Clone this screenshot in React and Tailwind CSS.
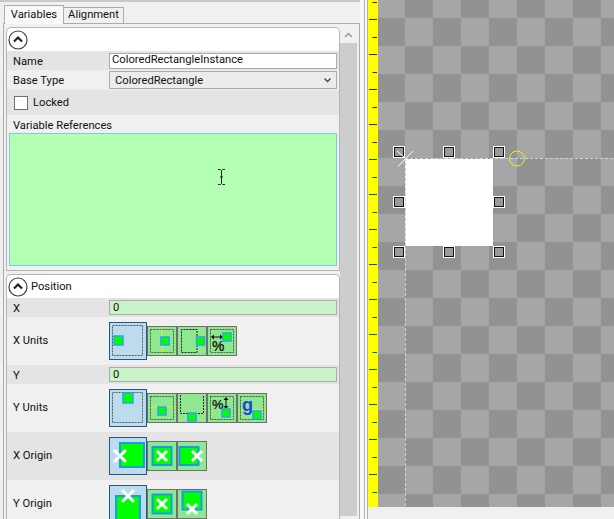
const rulerY = Array.from({ length: 15 }, (_, i) => i)

// small green square with the blue edge used on every unit button
const Sq = ({ x, y, s = 8, w = 1.5 }) => (
  <rect x={x} y={y} width={s} height={s} fill="#00ff00" stroke="#2aa5e8" strokeWidth={w} />
)

const Dots = ({ x = 3.5, y = 3.5, s = 23 }) => (
  <rect x={x} y={y} width={s} height={s} fill="none" stroke="#3a3a3a" strokeWidth="1" strokeDasharray="2 1" strokeOpacity="0.8" />
)

const Cross = ({ x, y, r = 5, w = 3 }) => (
  <path d={`M${x - r} ${y - r}L${x + r} ${y + r}M${x + r} ${y - r}L${x - r} ${y + r}`} stroke="#fff" strokeWidth={w} />
)

const ArrowH = ({ x1, x2, y }) => (
  <g fill="#111">
    <line x1={x1} x2={x2} y1={y} y2={y} stroke="#111" />
    <path d={`M${x1 - 1} ${y}l3 -2.5v5z`} />
    <path d={`M${x2 + 1} ${y}l-3 -2.5v5z`} />
  </g>
)

const ArrowV = ({ y1, y2, x }) => (
  <g fill="#111">
    <line x1={x} x2={x} y1={y1} y2={y2} stroke="#111" />
    <path d={`M${x} ${y1 - 1}l-2.5 3h5z`} />
    <path d={`M${x} ${y2 + 1}l-2.5 -3h5z`} />
  </g>
)

const IconBtn = ({ children }) => (
  <div className="h-[30px] w-[30px] shrink-0 border border-[#6f6f6f] bg-[#8fe88f]">
    <svg width="28" height="28" viewBox="1 1 28 28" className="block">{children}</svg>
  </div>
)

const IconSel = ({ children }) => (
  <div className="h-[38px] w-[38px] shrink-0 border border-[#1f5a85] bg-[#bcdcee]">
    <svg width="36" height="36" viewBox="1 1 36 36" overflow="hidden" className="block">{children}</svg>
  </div>
)

const Row = ({ label, h, bg, nudge = '', children }) => (
  <div className={`flex items-center ${h} ${bg}`}>
    <span className={`w-[102px] shrink-0 pl-[6px] ${nudge}`}>{label}</span>
    <div className="flex flex-1 items-center">{children}</div>
  </div>
)

const Collapse = () => (
  <svg width="20" height="20" viewBox="0 0 20 20" className="shrink-0">
    <circle cx="10" cy="10" r="9" fill="#fff" stroke="#404040" strokeWidth="1.2" />
    <path d="M6 11.5L10 7.5L14 11.5" fill="none" stroke="#202020" strokeWidth="2.2" />
  </svg>
)

const NumBox = () => (
  <div className="mr-[2px] flex h-[15px] flex-1 items-center border border-[#ababab] bg-[#c9f3c9] pl-[3px] pt-[1px]">0</div>
)

export default function App() {
  return (
    <div className="flex h-[519px] w-[614px] overflow-hidden bg-[#f0f0f0] font-['Roboto',sans-serif] text-[11.2px] text-[#111]">
      <div className="flex w-[360px] shrink-0 flex-col">
        <div className="h-[2px] w-full bg-[#c9c9c9]" />
        {/* tabs */}
        <div className="relative z-10 -mb-px flex h-[22px] items-end pl-[4px]">
          <div className="flex h-[19px] w-[60px] items-center justify-center border border-b-0 border-[#acacac] bg-[#f8f8f8]">Variables</div>
          <div className="flex h-[17px] w-[60px] items-center justify-center border border-l-0 border-[#acacac] bg-[#f0f0f0]">Alignment</div>
        </div>
        <div className="ml-[3px] flex min-h-0 w-[357px] flex-1 border border-b-0 border-[#acacac] pl-[2px] pt-[3px]">
          <div className="flex w-[334px] shrink-0 flex-col">
            {/* first group */}
            <div className="h-[244px] shrink-0 overflow-hidden rounded-t-[5px] border border-[#b5b5b5] bg-white">
              <div className="flex h-[23px] items-center pl-[1px]"><Collapse /></div>
              <Row label="Name" h="h-[19px]" bg="bg-[#e4e4e4]" nudge="pt-[3px]">
                <div className="mr-[2px] flex h-[16px] flex-1 items-center border border-[#ababab] bg-white pl-[2px]">ColoredRectangleInstance</div>
              </Row>
              <Row label="Base Type" h="h-[20px]" bg="bg-[#f0f0f0]" nudge="pt-[2px]">
                <div className="mr-[2px] flex h-[18px] flex-1 items-center justify-between border border-[#ababab] bg-[#ececec] pl-[5px] pr-[5px]">
                  <span className="pt-[2px]">ColoredRectangle</span>
                  <svg width="7" height="5" viewBox="0 0 7 5"><path d="M0.5 0.5L3.5 3.5L6.5 0.5" fill="none" stroke="#444" strokeWidth="1.3" /></svg>
                </div>
              </Row>
              <div className="flex h-[25px] items-center gap-[5px] bg-[#e4e4e4] pl-[7px]">
                <div className="h-[14px] w-[14px] border border-[#707070] bg-white" />
                <span className="pt-[2px]">Locked</span>
              </div>
              <div className="flex h-[155px] flex-col bg-[#f0f0f0] pl-[2px] pr-[2px]">
                <span className="pl-[4px] pt-[4px] leading-[14px]">Variable References</span>
                <div className="flex h-[133px] items-start border border-[#7cc7ec] bg-[#b3ffb3] pl-[207px] pt-[35px]">
                  <svg width="9" height="16" viewBox="0 0 9 16">
                    <path d="M1 0.5H3.5L4.5 1.5L5.5 0.5H8M4.5 1.5V14.5M1 15.5H3.5L4.5 14.5L5.5 15.5H8M3 8H6" fill="none" stroke="#222" />
                  </svg>
                </div>
              </div>
            </div>
            {/* position group */}
            <div className="mt-[3px] min-h-0 flex-1 overflow-hidden rounded-t-[5px] border border-b-0 border-[#b5b5b5] bg-white">
              <div className="flex h-[23px] items-center gap-[3px] pl-[1px]">
                <Collapse />
                <span className="pt-[2px]">Position</span>
              </div>
              <Row label="X" h="h-[19px]" bg="bg-[#e4e4e4]" nudge="pt-[3px]"><NumBox /></Row>
              <Row label="X Units" h="h-[48px]" bg="bg-[#f0f0f0]">
                <IconSel><Dots x={3.5} y={3.5} s={30} /><Sq x={5} y={14} s={9} /></IconSel>
                <IconBtn>
                  <line x1="15" x2="15" y1="1" y2="29" stroke="#e8e84a" />
                  <Dots /><Sq x={14} y={11} />
                </IconBtn>
                <IconBtn>
                  <path d="M20 10V3.5H4.5V26.5H20V20" fill="none" stroke="#222" strokeDasharray="2 1" />
                  <Sq x={19.5} y={11} />
                </IconBtn>
                <IconBtn>
                  <Dots />
                  <ArrowH x1={5} x2={15} y={11} />
                  <Sq x={16} y={7} />
                  <text x="5" y="25" fontSize="14" fontWeight="700" fill="#222" fontFamily="Liberation Sans">%</text>
                </IconBtn>
              </Row>
              <Row label="Y" h="h-[19px]" bg="bg-[#e4e4e4]" nudge="pt-[3px]"><NumBox /></Row>
              <Row label="Y Units" h="h-[48px]" bg="bg-[#f0f0f0]">
                <IconSel><Dots x={3.5} y={3.5} s={30} /><Sq x={14} y={4} s={10} /></IconSel>
                <IconBtn>
                  <line x1="1" x2="29" y1="14" y2="14" stroke="#e8e84a" />
                  <Dots /><Sq x={11} y={14} />
                </IconBtn>
                <IconBtn>
                  <path d="M3.5 2V20.5H26.5V2" fill="none" stroke="#222" strokeDasharray="2 1" />
                  <Sq x={11} y={20} />
                </IconBtn>
                <IconBtn>
                  <Dots />
                  <text x="5" y="16" fontSize="13" fontWeight="700" fill="#222" fontFamily="Liberation Sans">%</text>
                  <ArrowV y1={5} y2={15} x={19} />
                  <Sq x={15} y={16} />
                </IconBtn>
                <IconBtn>
                  <line x1="1" x2="29" y1="17" y2="17" stroke="#e8e84a" />
                  <Dots />
                  <text x="5" y="18" fontSize="18" fontWeight="700" fill="#1546e0" fontFamily="Liberation Sans">g</text>
                  <Sq x={16} y={18} />
                </IconBtn>
              </Row>
              <Row label="X Origin" h="h-[48px]" bg="bg-[#e4e4e4]">
                <IconSel>
                  <rect x="11" y="6" width="24" height="24" fill="#00ff00" stroke="#1a9ae8" strokeWidth="2" />
                  <Cross x={11} y={19} r={6} />
                </IconSel>
                <IconBtn>
                  <rect x="5.5" y="6" width="19" height="18" fill="#00ff00" stroke="#1a9ae8" strokeWidth="2" />
                  <Cross x={15} y={15} />
                </IconBtn>
                <IconBtn>
                  <rect x="2.5" y="6" width="19" height="18" fill="#00ff00" stroke="#1a9ae8" strokeWidth="2" />
                  <Cross x={20} y={15} />
                </IconBtn>
              </Row>
              <Row label="Y Origin" h="h-[48px]" bg="bg-[#f0f0f0]">
                <IconSel>
                  <rect x="7" y="11" width="24" height="24" fill="#00ff00" stroke="#1a9ae8" strokeWidth="2" />
                  <Cross x={19} y={11} r={6} />
                </IconSel>
                <IconBtn>
                  <rect x="5.5" y="5.5" width="19" height="19" fill="#00ff00" stroke="#1a9ae8" strokeWidth="2" />
                  <Cross x={15} y={15} />
                </IconBtn>
                <IconBtn>
                  <rect x="5.5" y="2.5" width="19" height="18" fill="#00ff00" stroke="#1a9ae8" strokeWidth="2" />
                  <Cross x={15} y={20} />
                </IconBtn>
              </Row>
            </div>
          </div>
          {/* scrollbar */}
          <div className="-mt-px flex w-[17px] shrink-0 flex-col">
            <div className="flex h-[17px] shrink-0 items-center justify-center bg-[#f0f0f0]">
              <svg width="9" height="6" viewBox="0 0 9 6"><path d="M1 5L4.5 1.5L8 5" fill="none" stroke="#9a9a9a" strokeWidth="1.5" /></svg>
            </div>
            <div className="h-[473px] shrink-0 bg-[#cdcdcd]" />
          </div>
        </div>
      </div>

      {/* splitter */}
      <div className="flex w-[8px] shrink-0 justify-between bg-[#f8f8f8] pl-[4px]">
        <div className="w-px bg-[#b0b0b0]" />
        <div className="w-px bg-[#b0b0b0]" />
      </div>

      {/* wireframe canvas */}
      <div className="flex min-w-0 flex-1 flex-col">
        <div className="flex h-[507px] shrink-0">
          <svg width="10" height="507" viewBox="0 0 10 507" className="block shrink-0 bg-[#ffff00]">
            {rulerY.map((i) => {
              const major = 19 + i * 35
              const minor = 2 + i * 35
              return (
                <g key={i}>
                  <line x1="4.5" x2="9" y1={minor + 0.5} y2={minor + 0.5} stroke={minor < 159 ? '#8b0000' : '#006400'} />
                  {major < 507 && <line x1="1" x2="9" y1={major + 0.5} y2={major + 0.5} stroke={major < 159 ? '#8b0000' : '#006400'} />}
                </g>
              )
            })}
          </svg>
          <div className="relative flex-1 overflow-hidden bg-[repeating-conic-gradient(#929292_0_25%,#a6a6a6_0_50%)] bg-[length:56px_56px] bg-[position:-1px_-10px]">
            <div className="absolute left-[27px] top-[159px] h-[87px] w-[88px] bg-white" />
            <svg width="236" height="507" viewBox="378 0 236 507" className="absolute left-0 top-0">
              <line x1="405" x2="614" y1="158.5" y2="158.5" stroke="#b5dcea" strokeDasharray="3 2" />
              <line x1="405.5" x2="405.5" y1="158" y2="507" stroke="#b5dcea" strokeDasharray="3 2" />
              <circle cx="517" cy="158.5" r="7.5" fill="none" stroke="#f0f020" />
              {[399, 449, 499].map((x) =>
                [152, 202, 252].map((y) =>
                  x === 449 && y === 202 ? null : (
                    <g key={`${x}-${y}`}>
                      <rect x={x - 5.5} y={y - 5.5} width="11" height="11" fill="none" stroke="#fff" />
                      <rect x={x - 4.5} y={y - 4.5} width="9" height="9" fill="#9a9a9a" stroke="#111" />
                    </g>
                  )
                )
              )}
              <line x1="398" y1="166.5" x2="413" y2="151" stroke="#fff" />
              <line x1="397" y1="151" x2="405" y2="158" stroke="#fff" />
            </svg>
          </div>
        </div>
      </div>
    </div>
  )
}
